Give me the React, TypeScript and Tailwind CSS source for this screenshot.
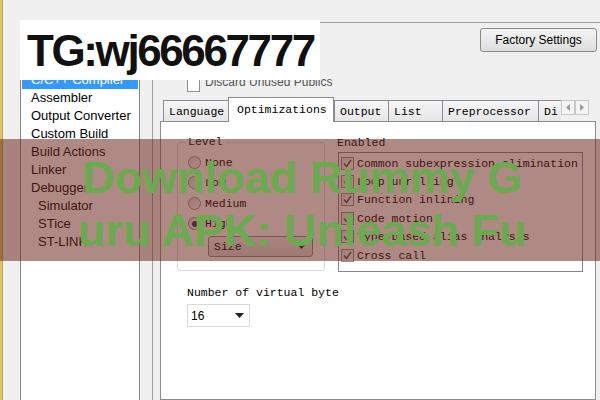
const mono = "font-['Liberation_Mono','DejaVu_Sans_Mono',monospace] text-[11.5px]";

const categories: { name: string; sub?: boolean; selected?: boolean }[] = [
  { name: "General Options" },
  { name: "Static Analysis" },
  { name: "C/C++ Compiler", selected: true },
  { name: "Assembler" },
  { name: "Output Converter" },
  { name: "Custom Build" },
  { name: "Build Actions" },
  { name: "Linker" },
  { name: "Debugger" },
  { name: "Simulator", sub: true },
  { name: "STice", sub: true },
  { name: "ST-LINK", sub: true },
];

const tabs = [
  { label: "Language", w: "w-[65px]" },
  { label: "Optimizations", w: "w-[106px]", active: true },
  { label: "Output", w: "w-[54px]" },
  { label: "List", w: "w-[54px]" },
  { label: "Preprocessor", w: "w-[96px]" },
];

const levels = [
  { label: "None" },
  { label: "Low" },
  { label: "Medium" },
  { label: "High", checked: true },
];

const transforms = [
  "Common subexpression elimination",
  "Loop unrolling",
  "Function inlining",
  "Code motion",
  "Type-based alias analysis",
  "Cross call",
];

export default function App() {
  return (
    <div className="relative flex h-[400px] w-[600px] overflow-hidden bg-[#f0f0f0] font-['Liberation_Sans',Arial,sans-serif] text-black">
      {/* window edge */}
      <div className="w-[2px] shrink-0 bg-[#e4c35e]" />
      <div className="w-px shrink-0 bg-[#a3a3a3]" />
      <div className="w-[17px] shrink-0" />
      <CategoryList />
      <div className="w-[12px] shrink-0" />
      <div className="mt-[22px] w-px shrink-0 bg-[#a0a0a0]" />
      <OptionsPane />

      {/* overlays */}
      <div className="absolute left-[20px] top-[20px] h-[60px] w-[300px] bg-white pl-[7px] pt-px text-[44px] font-bold leading-[60px] tracking-[-2.4px] text-[#111]">
        TG:wj66667777
      </div>
      <div className="absolute inset-x-0 top-[139px] h-[122px] bg-[#6e281e8c] pl-[4px] pt-[12px] text-center text-[45px] font-bold leading-[53px] text-[#6aab4f]">
        Download Rummy G
        <br />
        uru APK: Unleash Fu
      </div>
    </div>
  );
}

function CategoryList() {
  return (
    <div className="mt-[33px] h-[380px] w-[120px] shrink-0 border border-[#828790] bg-white p-px text-[13px]">
      {categories.map((c) => (
        <div
          key={c.name}
          className={
            "h-[18px] leading-[18px] " +
            (c.sub ? "pl-[16px] " : "pl-[9px] ") +
            (c.selected ? "bg-[#3399ff] text-white" : "text-black")
          }
        >
          {c.name}
        </div>
      ))}
    </div>
  );
}

function OptionsPane() {
  return (
    <div className="flex w-[447px] shrink-0 flex-col">
      <div className="h-[22px]" />
      <div className="flex justify-end border-t border-[#a0a0a0] pr-[3px] pt-[5px]">
        <button className="h-[24px] w-[117px] rounded-[3px] border border-[#8a8a8a] bg-linear-to-b from-[#f4f4f4] to-[#dedede] text-[12px] text-black">
          Factory Settings
        </button>
      </div>

      <div className="mt-[24px] flex h-[16px] items-start pl-[34px]">
        <div className="mt-[3px] h-[13px] w-[13px] border border-[#8e8f8f] bg-white" />
        <span className="ml-[5px] text-[12px] leading-[12px] text-[#555]">Discard Unused Publics</span>
      </div>

      {/* tab strip */}
      <div className="relative z-10 mt-[5px] flex h-[24px] items-end pl-[10px]">
        {tabs.map((t) => (
          <div
            key={t.label}
            className={
              t.w +
              " " +
              mono +
              (t.active
                ? " -mb-px h-[25px] border-x border-t border-[#898c95] bg-white pl-[8px] leading-[24px]"
                : " h-[21px] border-l border-t border-[#898c95] bg-linear-to-b from-[#f6f6f6] to-[#e6e6e6] pl-[5px] leading-[22px]")
            }
          >
            {t.label}
          </div>
        ))}
        <div
          className={
            "h-[21px] w-[23px] overflow-hidden border-l border-t border-[#898c95] bg-linear-to-b from-[#f6f6f6] to-[#e6e6e6] pl-[5px] leading-[22px] " +
            mono
          }
        >
          Di
        </div>
        <div className="mb-[6px] flex h-[15px]">
          <ScrollArrow dir="left" />
          <ScrollArrow dir="right" />
        </div>
      </div>

      {/* tab page */}
      <div className="ml-[7px] w-[436px] flex-1 border border-[#898c95] bg-white pl-[16px] pt-[14px]">
        <div className="flex items-start gap-[12px]">
          <fieldset className="w-[148px] rounded-[3px] border border-[#d5dbe0] px-[10px] pb-[13px]">
            <legend className={"ml-[-2px] px-[2px] leading-[12px] " + mono}>Level</legend>
            <div className="pt-[4px]">
              {levels.map((l) => (
                <div key={l.label} className="flex h-[20.5px] items-center">
                  <Radio checked={l.checked} />
                  <span className={"ml-[4px] " + mono}>{l.label}</span>
                </div>
              ))}
            </div>
            <div className="ml-[20px] mt-[2px] flex h-[21px] w-[105px] items-center justify-between rounded-[3px] border border-[#8a8a8a] bg-linear-to-b from-[#f2f2f2] to-[#dcdcdc] pl-[5px] pr-[6px]">
              <span className={mono}>Size</span>
              <Caret />
            </div>
          </fieldset>

          <div className="mt-px">
            <div className={"leading-[12px] " + mono}>Enabled</div>
            <div className="ml-px mt-[3px] h-[120px] w-[245px] border border-[#828790] bg-white pl-[2px] pt-px">
              {transforms.map((t) => (
                <div key={t} className="flex h-[18.4px] items-center">
                  <CheckBox />
                  <span className={"ml-[3px] whitespace-nowrap " + mono}>{t}</span>
                </div>
              ))}
            </div>
          </div>
        </div>

        <div className={"ml-[10px] mt-[15px] leading-[12px] " + mono}>Number of virtual byte</div>
        <div className="ml-[10px] mt-[5px] flex h-[23px] w-[63px] items-center justify-between border border-[#d9d9d9] bg-white pl-[3px] pr-[5px]">
          <span className="font-['Liberation_Sans',Arial,sans-serif] text-[12px]">16</span>
          <Caret />
        </div>
      </div>
    </div>
  );
}

function ScrollArrow({ dir }: { dir: "left" | "right" }) {
  return (
    <div className="flex h-[15px] w-[14px] items-center justify-center border border-[#c8c8c8] bg-[#f4f4f4]">
      <svg width="4" height="7" viewBox="0 0 4 7">
        {dir === "left" ? (
          <path d="M4 0 L0 3.5 L4 7 Z" fill="#9a9a9a" />
        ) : (
          <path d="M0 0 L4 3.5 L0 7 Z" fill="#9a9a9a" />
        )}
      </svg>
    </div>
  );
}

function Caret() {
  return (
    <svg width="9" height="5" viewBox="0 0 9 5">
      <path d="M0 0 H9 L4.5 5 Z" fill="#222" />
    </svg>
  );
}

function Radio({ checked }: { checked?: boolean }) {
  return (
    <div className="flex h-[13px] w-[13px] items-center justify-center rounded-full border border-[#8e8f8f] bg-linear-to-br from-[#dcdcdc] to-[#fbfbfb]">
      {checked && <div className="h-[6px] w-[6px] rounded-full bg-[#30364a]" />}
    </div>
  );
}

function CheckBox() {
  return (
    <div className="flex h-[13px] w-[13px] items-center justify-center border border-[#8e8f8f] bg-linear-to-br from-[#e6e6e6] to-[#fdfdfd]">
      <svg width="9" height="9" viewBox="0 0 9 9">
        <path d="M1 4.5 L3.5 7.5 L8 1" stroke="#4d4d4d" strokeWidth="1.4" fill="none" />
      </svg>
    </div>
  );
}
